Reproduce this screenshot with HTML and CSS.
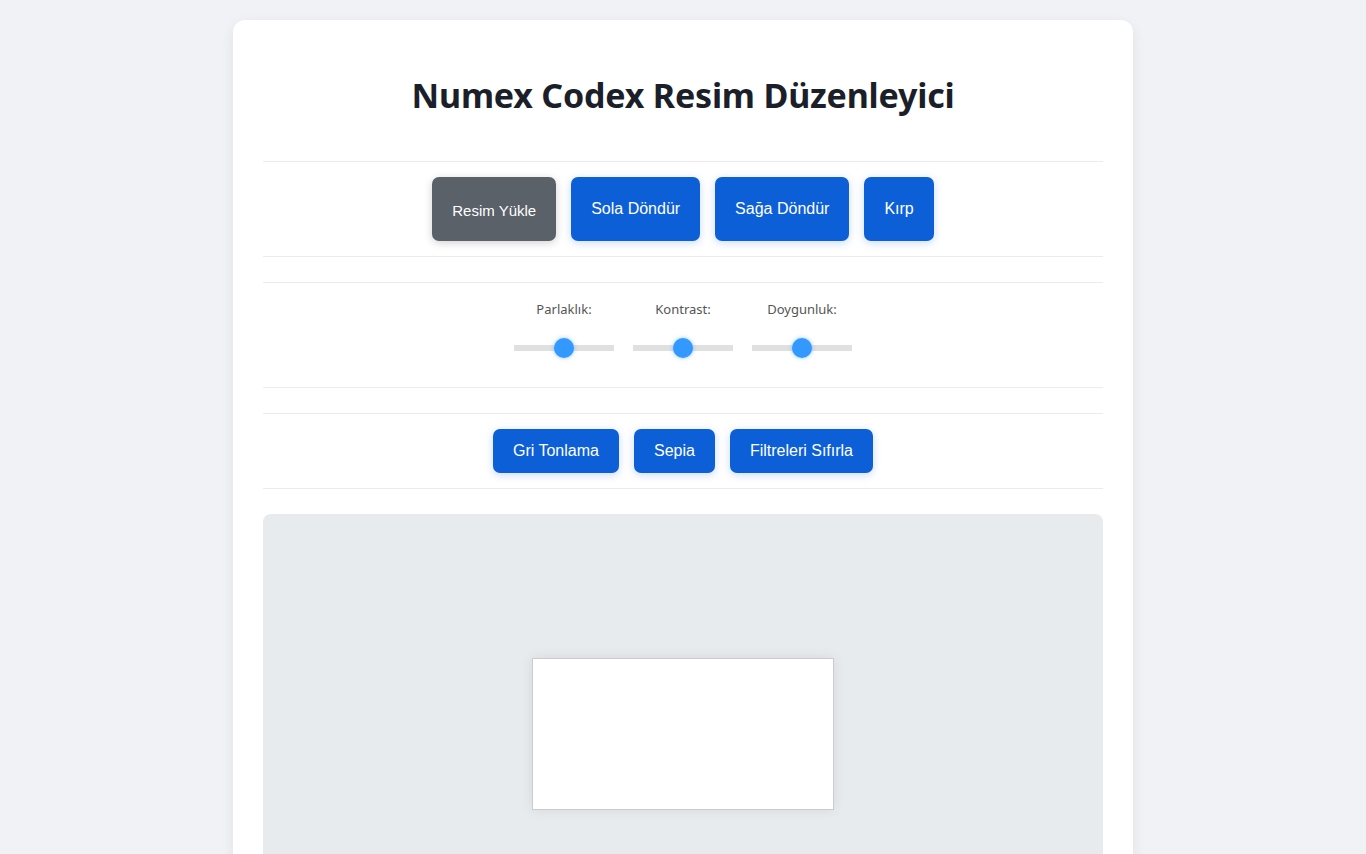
FILE: index.html
```html
<!DOCTYPE html>
<html lang="tr">
<head>
<meta charset="utf-8">
<title>Numex Codex Resim Düzenleyici</title>
<link rel="stylesheet" href="styles.css">
</head>
<body>
<div class="card">
  <h1 class="title">Numex Codex Resim Düzenleyici</h1>

  <div class="section toolbar">
    <label class="btn btn-upload">Resim Yükle</label>
    <button class="btn btn-primary btn-tall">Sola Döndür</button>
    <button class="btn btn-primary btn-tall">Sağa Döndür</button>
    <button class="btn btn-primary btn-tall">Kırp</button>
  </div>

  <div class="section sliders">
    <div class="slider-group">
      <span class="slider-label">Parlaklık:</span>
      <input class="range" type="range" min="0" max="200" value="100">
    </div>
    <div class="slider-group">
      <span class="slider-label">Kontrast:</span>
      <input class="range" type="range" min="0" max="200" value="100">
    </div>
    <div class="slider-group">
      <span class="slider-label">Doygunluk:</span>
      <input class="range" type="range" min="0" max="200" value="100">
    </div>
  </div>

  <div class="section filters">
    <button class="btn btn-primary btn-short">Gri Tonlama</button>
    <button class="btn btn-primary btn-short">Sepia</button>
    <button class="btn btn-primary btn-short">Filtreleri Sıfırla</button>
  </div>

  <div class="canvas-area">
    <div class="canvas"></div>
  </div>
</div>
</body>
</html>
```

FILE: styles.css
```css
* { box-sizing: border-box; }

html, body {
  margin: 0;
  padding: 0;
}

body {
  background: #f0f2f5;
  font-family: "Noto Sans", "Open Sans", sans-serif;
  padding-top: 20px;
}

.card {
  width: 900px;
  margin: 0 auto;
  background: #ffffff;
  border-radius: 12px;
  padding: 30px 30px 30px;
  box-shadow: 0 4px 14px rgba(0, 0, 0, 0.07);
}

.title {
  margin: 24px 0 44px;
  text-align: center;
  font-family: "Noto Sans", "Open Sans", sans-serif;
  font-weight: 700;
  font-size: 34px;
  line-height: 43px;
  color: #1b1f2a;
  letter-spacing: -0.2px;
}

.section {
  display: flex;
  justify-content: center;
  padding: 15px 0;
  border-top: 1px solid #ececec;
  border-bottom: 1px solid #ececec;
  margin-bottom: 25px;
}

.toolbar, .filters {
  gap: 15px;
}

.btn {
  display: inline-flex;
  align-items: center;
  justify-content: center;
  border: none;
  border-radius: 7px;
  padding: 0 20px;
  font-family: "Liberation Sans", Arial, sans-serif;
  font-size: 16px;
  color: #ffffff;
  cursor: pointer;
}

.btn-tall { height: 64px; }
.btn-short { height: 44px; }

.btn-primary {
  background: #0d5fd8;
  box-shadow: 0 2px 8px rgba(13, 95, 216, 0.22);
}

.btn-upload {
  height: 64px;
  padding-top: 2px;
  background: #5a6168;
  font-size: 15px;
  box-shadow: 0 2px 8px rgba(0, 0, 0, 0.18);
}

.sliders {
  gap: 19px;
  padding: 15px 0 14px;
}

.slider-group {
  display: flex;
  flex-direction: column;
  align-items: center;
  width: 100px;
}

.slider-label {
  font-size: 13px;
  line-height: 22px;
  color: #555555;
}

.range {
  -webkit-appearance: none;
  appearance: none;
  width: 100px;
  height: 6px;
  margin: 25px 0 22px;
  background: #e0e0e0;
  outline: none;
  border-radius: 0;
}

.range::-webkit-slider-thumb {
  -webkit-appearance: none;
  appearance: none;
  width: 20px;
  height: 20px;
  border-radius: 50%;
  background: #3399ff;
  box-shadow: 0 0 4px rgba(51, 153, 255, 0.55);
  cursor: pointer;
}

.canvas-area {
  display: flex;
  align-items: center;
  justify-content: center;
  min-height: 440px;
  background: #e8ebee;
  border-radius: 8px;
}

.canvas {
  width: 302px;
  height: 152px;
  background: #ffffff;
  border: 1px solid #cccccc;
  box-shadow: 0 0 12px rgba(0, 0, 0, 0.08);
}
```
